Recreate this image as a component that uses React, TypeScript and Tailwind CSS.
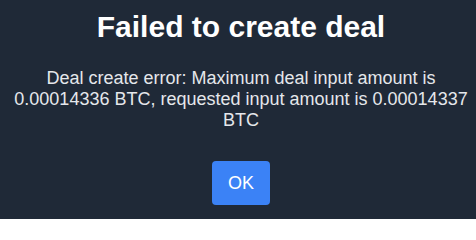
export default function App() {
  return (
    <div className="flex h-[219px] w-[476px] flex-col items-center bg-[#1f2937] pl-[12px] pr-[6px] pt-[9px] text-center font-['Liberation_Sans',Arial,sans-serif]">
      <h1 className="text-[30px] font-bold leading-[36px] text-white">Failed to create deal</h1>
      <p className="mt-[23px] text-[18px] leading-[21px] text-[#e5e7eb]">
        Deal create error: Maximum deal input amount is 0.00014336 BTC, requested input amount is 0.00014337 BTC
      </p>
      <button className="mt-[30px] h-[44px] w-[58px] rounded bg-[#3b82f6] text-[18px] text-white">OK</button>
    </div>
  );
}
